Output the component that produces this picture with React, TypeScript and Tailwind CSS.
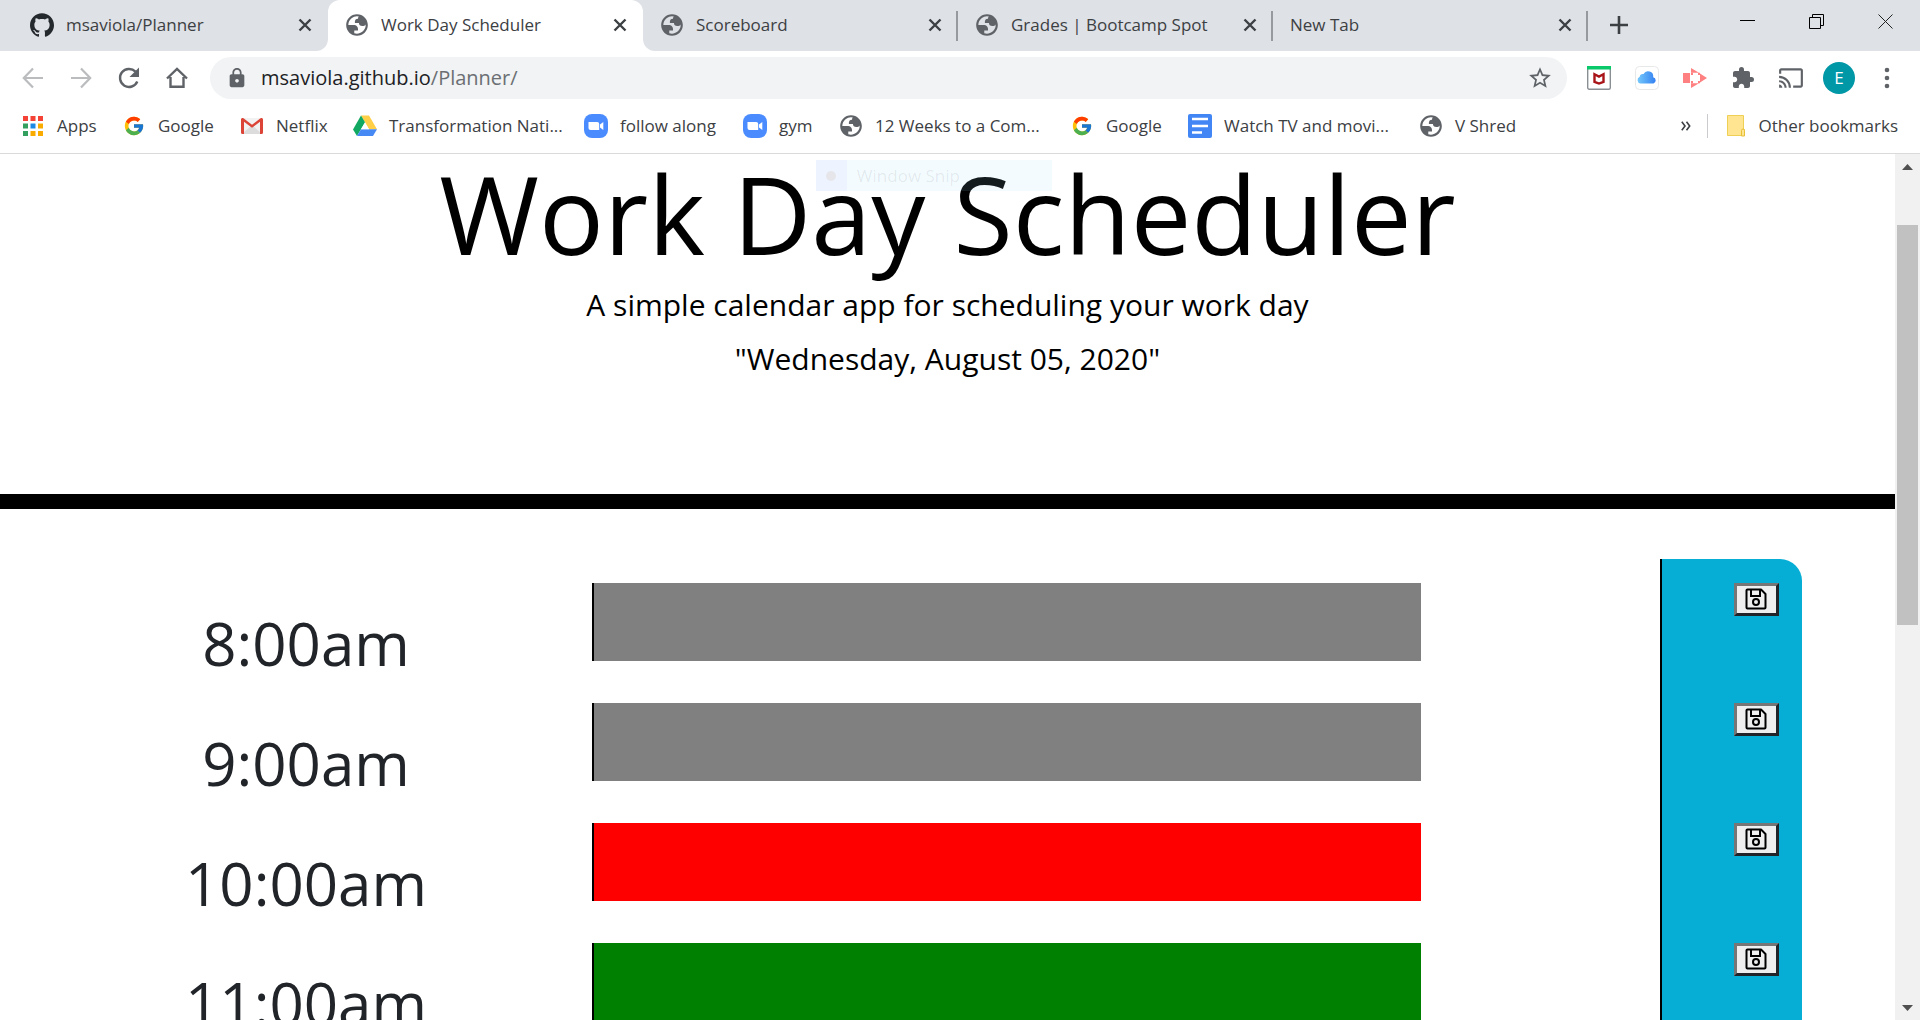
import React from "react";
import { MdLock, MdStarBorder, MdExtension, MdCast } from "react-icons/md";
import { SiGithub } from "react-icons/si";
import { FcGoogle } from "react-icons/fc";

const Globe = () => (
  <svg viewBox="0 0 24 24" className="size-[26px] shrink-0" fill="#5f6368" fillRule="evenodd">
    <path d="M12 2C6.480 2 2 6.480 2 12s4.480 10 10 10 10-4.480 10-10S17.520 2 12 2zM4 12h4.400c3.407.022 4.922 1.730 4.543 5.127H9.488v2.470a8.004 8.004 0 0 0 10.498-8.083C19.327 12.504 18.332 13 17 13c-2.137 0-3.206-.916-3.206-2.750h-3.748c-.274-2.728.683-4.092 2.870-4.092 0-.975.327-1.597.811-1.970A8.004 8.004 0 0 0 4 12z" />
  </svg>
);

const Floppy = () => (
  <svg viewBox="0 0 22 22" className="size-[22px] shrink-0" fill="none" stroke="#000" strokeWidth="2">
    <path d="M2.500 1.500h13.500l4.500 4.500v13.500a1 1 0 0 1-1 1h-17a1 1 0 0 1-1-1v-17a1 1 0 0 1 1-1z" strokeLinejoin="round" />
    <path d="M6 2v6h9V2" />
    <circle cx="11" cy="14" r="3" />
  </svg>
);

const CloseX = () => (
  <svg viewBox="0 0 14 14" className="size-3.5" stroke="#3c4043" strokeWidth="2.4" fill="none">
    <path d="M1.5 1.5 12.5 12.5M12.5 1.5 1.5 12.5" />
  </svg>
);

const Gmail = () => (
  <svg viewBox="0 0 24 24" className="size-6">
    <path d="M2 4h20v16H2z" fill="#f2f2f2" />
    <path d="M2 20 12 11l10 9z" fill="#dcdcdc" />
    <path d="M1 5.500v13A1.500 1.500 0 0 0 2.500 20H4V7.800l8 6 8-6V20h1.500a1.500 1.500 0 0 0 1.500-1.500v-13C23 4 21.500 3.500 20.500 4.300L12 10.700 3.500 4.300C2.500 3.500 1 4 1 5.500z" fill="#db4437" />
  </svg>
);

const Drive = () => (
  <svg viewBox="0 0 24 24" className="size-6">
    <path d="M8 1.500h8l8 13.800h-8z" fill="#ffcf48" />
    <path d="M8 1.500 0 15.500 4 22l8-13.800z" fill="#11a861" />
    <path d="M8 15.300h16L20 22H4z" fill="#4688f4" />
    <path d="M12 8.400 16 15.300H8z" fill="#fff" />
  </svg>
);

const Zoom = () => (
  <svg viewBox="0 0 24 24" className="size-6">
    <rect width="24" height="24" rx="8" fill="#4a8cff" />
    <path d="M4.500 8h8.700a2 2 0 0 1 2 2v6H6.500a2 2 0 0 1-2-2z" fill="#fff" />
    <path d="M16 10.600 19.300 8v8L16 13.400z" fill="#fff" />
  </svg>
);

const Docs = () => (
  <svg viewBox="0 0 24 24" className="size-6">
    <rect width="24" height="24" rx="2" fill="#4285f4" />
    <path d="M4 5h16M4 12h16M4 18.500h10" stroke="#fff" strokeWidth="2.600" />
  </svg>
);

const appColors = ["#f44336", "#f44336", "#f44336", "#34a060", "#1e88e5", "#f9ab00", "#34a060", "#f9ab00", "#f9ab00"];
const Apps = () => (
  <svg viewBox="0 0 24 24" className="size-6">
    {appColors.map((c, i) => (
      <rect key={i} x={2 + (i % 3) * 7.5} y={2 + Math.floor(i / 3) * 7.5} width="5" height="5" fill={c} />
    ))}
  </svg>
);

const GoogleG = () => <FcGoogle className="size-[22px]" />;

function Tab({ icon, title, active, divider }: { icon?: React.ReactNode; title: string; active?: boolean; divider?: boolean }) {
  return (
    <div className={"relative flex h-full w-[315px] min-w-0 items-center pb-0.5 pl-[17px] pr-4 " + (active ? "rounded-t-xl bg-white" : "")}>
      {active && (
        <>
          <span className="absolute -left-3 bottom-0 size-3 bg-white">
            <span className="block size-3 rounded-br-xl bg-[#dee1e6]" />
          </span>
          <span className="absolute -right-3 bottom-0 size-3 bg-white">
            <span className="block size-3 rounded-bl-xl bg-[#dee1e6]" />
          </span>
        </>
      )}
      {icon && <span className="mr-3 flex size-6 shrink-0 items-center justify-center">{icon}</span>}
      <span className="min-w-0 flex-1 truncate text-[17px]">{title}</span>
      <button aria-label={"Close " + title}><CloseX /></button>
      {divider && <span className="absolute right-0 top-[11px] h-[30px] w-0.5 bg-[#96999d]" />}
    </div>
  );
}

function Bookmark({ icon, label, width }: { icon: React.ReactNode; label: string; width: string }) {
  return (
    <a href="#" className={"flex shrink-0 items-center gap-3 whitespace-nowrap " + width}>
      <span className="flex size-6 shrink-0 items-center justify-center">{icon}</span>
      {label}
    </a>
  );
}

const bookmarks = [
  { icon: <Apps />, label: "Apps", width: "w-[101px]" },
  { icon: <GoogleG />, label: "Google", width: "w-[118px]" },
  { icon: <Gmail />, label: "Netflix", width: "w-[113px]" },
  { icon: <Drive />, label: "Transformation Nati...", width: "w-[231px]" },
  { icon: <Zoom />, label: "follow along", width: "w-[159px]" },
  { icon: <Zoom />, label: "gym", width: "w-[96px]" },
  { icon: <Globe />, label: "12 Weeks to a Com...", width: "w-[231px]" },
  { icon: <GoogleG />, label: "Google", width: "w-[118px]" },
  { icon: <Docs />, label: "Watch TV and movi...", width: "w-[231px]" },
  { icon: <Globe />, label: "V Shred", width: "w-[118px]" },
];

const hours = [
  { time: "8:00am", color: "bg-[#808080]" },
  { time: "9:00am", color: "bg-[#808080]" },
  { time: "10:00am", color: "bg-[#ff0000]" },
  { time: "11:00am", color: "bg-[#008000]" },
];

function TabStrip() {
  return (
    <div className="flex h-[51px] shrink-0 items-stretch bg-[#dee1e6] pl-[13px]">
      <Tab icon={<SiGithub className="size-6 text-[#24292e]" />} title="msaviola/Planner" />
      <Tab icon={<Globe />} title="Work Day Scheduler" active />
      <Tab icon={<Globe />} title="Scoreboard" divider />
      <Tab icon={<Globe />} title="Grades | Bootcamp Spot" divider />
      <Tab title="New Tab" divider />
      <button aria-label="New tab" className="ml-[22px] flex items-center pb-0.5">
        <svg viewBox="0 0 18 18" className="size-[18px]" stroke="#3c4043" strokeWidth="2.600"><path d="M9 0v18M0 9h18" /></svg>
      </button>
      <div className="ml-auto flex h-[43px] items-center gap-[53px] pr-[26px]">
        <button aria-label="Minimize"><svg viewBox="0 0 16 16" className="size-4" stroke="#000" fill="none"><path d="M0 6.500h15" /></svg></button>
        <button aria-label="Restore"><svg viewBox="0 0 16 16" className="size-4" stroke="#000" fill="none"><path d="M.5 3.500h11v11H.5zM3.500 3.500v-3h11v11h-3" /></svg></button>
        <button aria-label="Close window"><svg viewBox="0 0 16 16" className="size-4" stroke="#222" fill="none"><path d="M.5.500l14 14M14.500.500l-14 14" /></svg></button>
      </div>
    </div>
  );
}

function Toolbar() {
  return (
    <div className="flex h-[54px] shrink-0 items-center pl-[21px] pr-[21px]">
      <div className="flex w-[189px] shrink-0 items-center gap-6">
        <button aria-label="Back"><svg viewBox="0 0 24 24" className="size-6" stroke="#babcbe" strokeWidth="2.200" fill="none"><path d="M22 12H3M12 2.500 2.800 12l9.200 9.500" /></svg></button>
        <button aria-label="Forward"><svg viewBox="0 0 24 24" className="size-6" stroke="#babcbe" strokeWidth="2.200" fill="none"><path d="M2 12h19M12 2.500l9.200 9.500-9.200 9.500" /></svg></button>
        <button aria-label="Reload">
          <svg viewBox="0 0 24 24" className="size-6" fill="none">
            <path d="M20.300 15.500A9 9 0 1 1 18.500 5.700" stroke="#5f6368" strokeWidth="2.400" />
            <path d="M22 1.500V11h-9.500z" fill="#5f6368" />
          </svg>
        </button>
        <button aria-label="Home"><svg viewBox="0 0 24 24" className="size-6" stroke="#5f6368" strokeWidth="2.400" fill="none"><path d="M2 12.500 12 3l10 9.500M5.500 11v9.800h13V11" /></svg></button>
      </div>
      <div className="flex h-[42px] min-w-0 flex-1 items-center rounded-full bg-[#f1f3f4] pl-4 pr-3.5">
        <MdLock className="size-[22px] shrink-0 text-[#5f6368]" />
        <a href="#" className="ml-[13px] flex-1 truncate text-[20px] text-[#202124]">msaviola.github.io<span className="text-[#6b6f73]">/Planner/</span></a>
        <button aria-label="Bookmark this page"><MdStarBorder className="size-[26px] text-[#5f6368]" /></button>
      </div>
      <div className="ml-5 flex shrink-0 items-center gap-6">
        <button aria-label="McAfee">
          <svg viewBox="0 0 24 24" className="size-6">
            <rect x=".7" y=".7" width="22.600" height="22.600" rx="1.500" fill="#fff" stroke="#8a8f94" strokeWidth="1.400" />
            <path d="M0 0h24v3.500H0z" fill="#0ac96a" />
            <path d="M7.500 8.300 12 10.600l4.500-2.300v7.500L12 17.500l-4.500-1.700z" fill="none" stroke="#a81418" strokeWidth="2.400" />
          </svg>
        </button>
        <button aria-label="iCloud">
          <svg viewBox="0 0 24 24" className="size-6">
            <defs>
              <linearGradient id="cloud" x1="0" x2="1" y1="0" y2="0">
                <stop offset="0" stopColor="#74c8fb" />
                <stop offset="1" stopColor="#3480f2" />
              </linearGradient>
            </defs>
            <rect x=".5" y=".5" width="23" height="23" rx="4" fill="#fff" stroke="#e8e8e8" />
            <path d="M5.500 17.500a3.500 3.500 0 0 1-.8-6.700A3 3 0 0 1 8.500 8a5.200 5.200 0 0 1 9.700 3.200 3.300 3.300 0 0 1 .3 6.300z" fill="url(#cloud)" />
          </svg>
        </button>
        <button aria-label="Screencastify">
          <svg viewBox="0 0 24 24" className="size-6" fill="#ff8080">
            <path d="M0 7h7v10H0z" />
            <path d="M8 2l8 4.800H8zM8 22v-4.800h8zM17 7.500l7 4.500-7 4.500z" />
            <path d="M8 6.800h2V9H8zM8 15h2v2.200H8zM15 6.800h2V9h-2zM15 15h2v2.200h-2z" />
          </svg>
        </button>
        <button aria-label="Extensions"><MdExtension className="size-6 text-[#5f6368]" /></button>
        <button aria-label="Cast" className="-mx-px"><MdCast className="size-[26px] text-[#5f6368]" /></button>
        <button aria-label="Profile" className="-mx-1 flex size-8 items-center justify-center rounded-full bg-[#0097a7] text-[17px] text-white">E</button>
        <button aria-label="Menu">
          <svg viewBox="0 0 24 24" className="size-6" fill="#5f6368"><circle cx="12" cy="4" r="2.300" /><circle cx="12" cy="12" r="2.300" /><circle cx="12" cy="20" r="2.300" /></svg>
        </button>
      </div>
    </div>
  );
}

function BookmarkBar() {
  return (
    <nav className="flex h-[49px] shrink-0 items-center border-b border-[#d9dadc] pb-1.5 pl-[21px] pr-[22px] text-[17px]">
      {bookmarks.map((b, i) => <Bookmark key={i} {...b} />)}
      <button aria-label="More bookmarks" className="ml-auto">
        <svg viewBox="0 0 10 10" className="size-2.5" stroke="#3c4043" strokeWidth="1.600" fill="none"><path d="M.8.800 4 5 .8 9.200M5.500.800 8.700 5 5.500 9.200" /></svg>
      </button>
      <span className="mx-4 h-6 w-px bg-[#c9cbce]" />
      <a href="#" className="flex items-center gap-2.5 whitespace-nowrap">
        <svg viewBox="0 0 24 24" className="size-6">
          <path d="M3.500 1.500h16v14h1v6h-17z" fill="#ffe591" stroke="#f0cf55" />
          <path d="M17.500 22v-5.500a1.500 1.500 0 0 1 3 0V22z" fill="#ffe591" stroke="#e8c038" />
        </svg>
        Other bookmarks
      </a>
    </nav>
  );
}

function Planner() {
  return (
    <main className="min-w-0 flex-1 overflow-hidden text-black">
      <header className="relative border-b-[15px] border-black pb-[113px] pt-1.5 text-center">
        <h1 className="text-[108px] leading-[108px]">Work Day Scheduler</h1>
        <p className="mt-3.5 text-[30px] leading-[45px]">A simple calendar app for scheduling your work day</p>
        <p className="mt-[9px] text-[30px] leading-[45px]">"Wednesday, August 05, 2020"</p>
        <div className="absolute left-[43%] top-1.5 ml-px flex h-[31px] w-[236px] items-center bg-[#a0e0ff]/12 text-[17px] text-black/8">
          <span className="flex h-full w-[31px] items-center justify-center bg-[#d8dcff]/20">
            <span className="size-2.5 rounded-full bg-[#d8c8b8]/30" />
          </span>
          <span className="ml-2.5">Window Snip</span>
        </div>
      </header>
      <section className="grid grid-cols-[573fr_829fr_239fr_142fr] pl-[19px] pr-[93px] pt-[50px]">
        <div className="flex flex-col gap-[30px] pl-px pt-[39px] text-center text-[60px] leading-[90px] text-[#212529]">
          {hours.map((h) => <div key={h.time}>{h.time}</div>)}
        </div>
        <div className="flex flex-col gap-[42px] pt-6">
          {hours.map((h) => (
            <textarea key={h.time} aria-label={h.time} className={"block h-[78px] w-full resize-none border-l-2 border-black " + h.color} />
          ))}
        </div>
        <div />
        <div className="flex flex-col items-end gap-[87px] rounded-tr-[22px] border-l-2 border-black bg-[#06aed5] pb-[87px] pr-[23px] pt-6">
          {hours.map((h) => (
            <button key={h.time} aria-label={"Save " + h.time} className="flex h-[33px] w-[45px] items-center justify-center border-[3px] border-b-[#212529] border-l-[#767676] border-r-[#212529] border-t-[#767676] bg-[#efefef] pb-0.5 pr-px">
              <Floppy />
            </button>
          ))}
        </div>
      </section>
    </main>
  );
}

export default function App() {
  return (
    <div className="flex h-screen flex-col overflow-hidden bg-white font-['Open_Sans',sans-serif] text-[#3c4043]">
      <TabStrip />
      <Toolbar />
      <BookmarkBar />
      <div className="flex min-h-0 flex-1">
        <Planner />
        <aside className="flex w-[25px] shrink-0 flex-col items-center bg-[#f1f1f1]">
          <svg viewBox="0 0 11 6" className="mt-2.5 h-1.5 w-[11px]"><path d="M0 6 5.500 0 11 6z" fill="#505050" /></svg>
          <div className="mt-[55px] h-[400px] w-[21px] bg-[#c1c1c1]" />
          <svg viewBox="0 0 11 6" className="mb-[9px] mt-auto h-1.5 w-[11px]"><path d="M0 0 5.500 6 11 0z" fill="#505050" /></svg>
        </aside>
      </div>
    </div>
  );
}
